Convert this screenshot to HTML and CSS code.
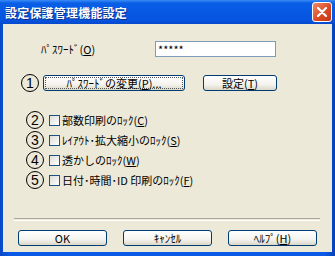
FILE: index.html
```html
<!DOCTYPE html>
<html lang="ja">
<head>
  <meta charset="UTF-8">
  <title>設定保護管理機能設定</title>
  <link rel="stylesheet" href="styles.css">
</head>
<body>

  <div class="dialog">
    <div class="titlebar">
      <span class="title">設定保護管理機能設定</span>
      <button class="close" aria-label="閉じる">
        <svg width="10" height="10" viewBox="0 0 10 10">
          <path d="M1 1 L9 9 M9 1 L1 9" stroke="#fff" stroke-width="2.2" stroke-linecap="round"/>
        </svg>
      </button>
    </div>

    <div class="client">
      <div class="pass-row">
        <label class="pass-label" for="password">ﾊﾟｽﾜｰﾄﾞ(<u>O</u>)</label>
        <input type="text" id="password" class="field" value="*****">
      </div>

      <div class="action-row">
        <span class="num">1</span>
        <button class="btn btn-change"><span class="focus">ﾊﾟｽﾜｰﾄﾞの変更(<u>P</u>)...</span></button>
        <button class="btn btn-set">設定(<u>T</u>)</button>
      </div>

      <div class="locks">
        <label class="lock">
          <span class="num">2</span>
          <input type="checkbox" class="check">
          <span>部数印刷のﾛｯｸ(<u>C</u>)</span>
        </label>
        <label class="lock">
          <span class="num">3</span>
          <input type="checkbox" class="check">
          <span>ﾚｲｱｳﾄ･拡大縮小のﾛｯｸ(<u>S</u>)</span>
        </label>
        <label class="lock">
          <span class="num">4</span>
          <input type="checkbox" class="check">
          <span>透かしのﾛｯｸ(<u>W</u>)</span>
        </label>
        <label class="lock">
          <span class="num">5</span>
          <input type="checkbox" class="check">
          <span>日付･時間･ID 印刷のﾛｯｸ(<u>F</u>)</span>
        </label>
      </div>

      <div class="separator"></div>

      <div class="footer">
        <button class="btn btn-foot">OK</button>
        <button class="btn btn-foot">ｷｬﾝｾﾙ</button>
        <button class="btn btn-foot">ﾍﾙﾌﾟ(<u>H</u>)</button>
      </div>
    </div>
  </div>

</body>
</html>
```

FILE: styles.css
```css
body {
  margin: 0;
  font-family: "Noto Sans CJK JP", sans-serif;
  font-size: 11px;
  color: #000;
}

.dialog {
  width: 335px;
  height: 256px;
  display: flex;
  flex-direction: column;
  background: linear-gradient(90deg, #0848c8, #0a5ae6 10px, #0a5ae6 325px, #0640b8);
}

/* XP style caption */
.titlebar {
  height: 24px;
  display: flex;
  align-items: center;
  justify-content: space-between;
  padding: 0 3px 0 5px;
  background: linear-gradient(#3c8cf6 0, #0a5fe6 3px, #0758e4 12px, #0654e0 20px, #0649cc 24px);
}

.title {
  color: #fff;
  font-weight: bold;
  font-size: 12px;
  letter-spacing: 0.2px;
  text-shadow: 1px 1px 0 #0a2f8a;
}

.close {
  width: 20px;
  height: 20px;
  padding: 0;
  display: flex;
  align-items: center;
  justify-content: center;
  border: 1px solid #fff;
  border-radius: 3px;
  background: linear-gradient(135deg, #f08a6a, #d9471f 60%, #c0391a);
}

.client {
  flex: 1;
  margin: 0 3px 4px 3px;
  background-color: #ece9d8;
  display: flex;
  flex-direction: column;
}

.pass-row {
  display: flex;
  align-items: center;
  margin-top: 17px;
  padding-left: 38px;
}

.pass-label {
  width: 114px;
}

.field {
  width: 121px;
  height: 16px;
  box-sizing: border-box;
  margin: 0;
  padding: 0 2px;
  border: 1px solid #7f9db9;
  background: #fff;
  font-family: "Noto Sans CJK JP", sans-serif;
  font-size: 11px;
  color: #000;
}

.action-row {
  display: flex;
  align-items: center;
  margin-top: 17px;
  padding-left: 18px;
}

.action-row .num {
  margin-right: 4px;
}

.num {
  width: 18px;
  height: 18px;
  box-sizing: border-box;
  border: 1.6px solid #000;
  border-radius: 50%;
  display: flex;
  align-items: center;
  justify-content: center;
  font-family: "Liberation Sans", sans-serif;
  font-size: 14px;
  line-height: 1;
  flex-shrink: 0;
}

.btn {
  height: 16px;
  box-sizing: border-box;
  padding: 0;
  border: 1px solid #003c74;
  border-radius: 3px;
  background: linear-gradient(#ffffff, #f4f3ee 60%, #dcd8c8);
  font-family: "Noto Sans CJK JP", sans-serif;
  font-size: 11px;
  line-height: 1;
  color: #000;
  display: flex;
  align-items: center;
  justify-content: center;
}

.btn-change {
  width: 142px;
  padding: 1px;
}

.focus {
  flex: 1;
  align-self: stretch;
  display: flex;
  align-items: center;
  justify-content: center;
  border: 1px dotted #555;
}

.btn-set {
  width: 74px;
  margin-left: 18px;
}

.locks {
  display: flex;
  flex-direction: column;
  gap: 2px;
  margin-top: 19px;
  padding-left: 23px;
}

.lock {
  display: flex;
  align-items: center;
  height: 18px;
}

.check {
  appearance: none;
  width: 11px;
  height: 11px;
  margin: 0 2px 0 5px;
  border: 1px solid #1c5180;
  background: linear-gradient(135deg, #dcdcd7, #ffffff);
}

.separator {
  margin: auto 12px 0 11px;
  height: 1px;
  border-top: 1px solid #aca899;
  border-bottom: 1px solid #fff;
}

.footer {
  display: flex;
  gap: 16px;
  margin-top: 9px;
  padding: 0 0 6px 15px;
}

.btn-foot {
  width: 89px;
}
```
